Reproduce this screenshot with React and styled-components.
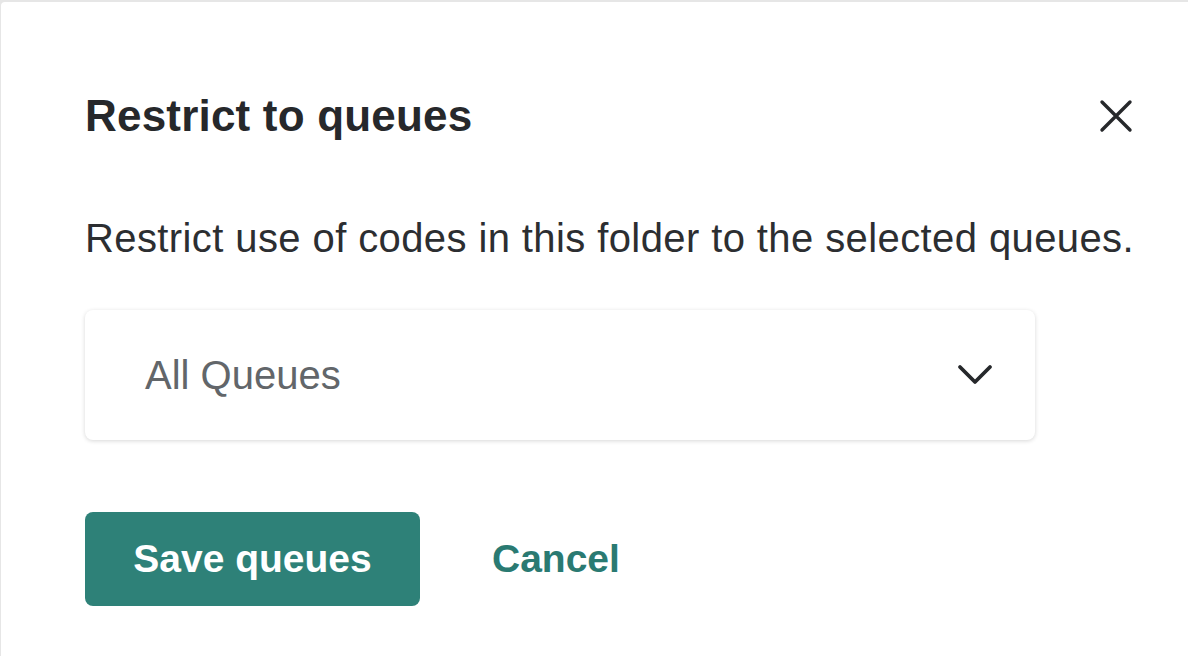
import React from 'react';
import styled, { createGlobalStyle } from 'styled-components';

const GlobalStyle = createGlobalStyle`
  html, body {
    margin: 0;
    padding: 0;
    background: #e6e6e6;
    font-family: 'Liberation Sans', Arial, sans-serif;
  }
`;

const App = () => {
  return (
    <>
      <GlobalStyle />
      <Page>
        <Modal>
          <Header>
            <Title>Restrict to queues</Title>
            <CloseButton aria-label='Close'>
              <svg width='34' height='34' viewBox='0 0 34 34'>
                <path
                  d='M3 3 L31 31 M31 3 L3 31'
                  stroke='#26282b'
                  strokeWidth='3.4'
                  strokeLinecap='round'
                />
              </svg>
            </CloseButton>
          </Header>

          <Description>
            Restrict use of codes in this folder to the selected queues.
          </Description>

          <Select>
            <span>All Queues</span>
            <svg width='36' height='22' viewBox='0 0 36 22'>
              <path
                d='M3 3 L18 18 L33 3'
                fill='none'
                stroke='#26282b'
                strokeWidth='3.8'
                strokeLinecap='round'
                strokeLinejoin='round'
              />
            </svg>
          </Select>

          <Actions>
            <PrimaryButton>Save queues</PrimaryButton>
            <LinkButton>Cancel</LinkButton>
          </Actions>
        </Modal>
      </Page>
    </>
  );
};

const Page = styled.div`
  padding: 2px 0 0 1px;
  height: 656px;
  box-sizing: border-box;
  overflow: hidden;
`;

const Modal = styled.div`
  background: #ffffff;
  height: 100%;
  border-top-left-radius: 4px;
  padding: 92px 55px 0 84px;
  box-sizing: border-box;
`;

const Header = styled.div`
  display: flex;
  align-items: center;
  justify-content: space-between;
  height: 44px;
`;

const Title = styled.h1`
  margin: 0;
  font-size: 44px;
  font-weight: 700;
  color: #26282b;
  letter-spacing: 0.2px;
  line-height: 44px;
`;

const CloseButton = styled.button`
  border: none;
  background: none;
  padding: 0;
  display: flex;
  cursor: pointer;
`;

const Description = styled.p`
  margin: 80px 0 0 0;
  font-size: 40px;
  line-height: 40px;
  letter-spacing: 0.4px;
  color: #2c2e31;
  white-space: nowrap;
`;

const Select = styled.div`
  margin-top: 52px;
  width: 950px;
  height: 130px;
  box-sizing: border-box;
  border-radius: 8px;
  background: #ffffff;
  box-shadow: 0 1px 4px rgba(0, 0, 0, 0.16);
  display: flex;
  align-items: center;
  justify-content: space-between;
  padding: 0 42px 0 60px;
  font-size: 40px;
  color: #62666a;
`;

const Actions = styled.div`
  margin-top: 72px;
  display: flex;
  align-items: center;
  gap: 72px;
`;

const PrimaryButton = styled.button`
  width: 335px;
  height: 94px;
  border: none;
  border-radius: 8px;
  background: #2e8178;
  color: #ffffff;
  font-family: 'Liberation Sans', Arial, sans-serif;
  font-size: 39px;
  font-weight: 700;
  cursor: pointer;
`;

const LinkButton = styled.button`
  border: none;
  background: none;
  padding: 0;
  color: #2a7a72;
  font-family: 'Liberation Sans', Arial, sans-serif;
  font-size: 39px;
  font-weight: 700;
  cursor: pointer;
`;

export default App;
